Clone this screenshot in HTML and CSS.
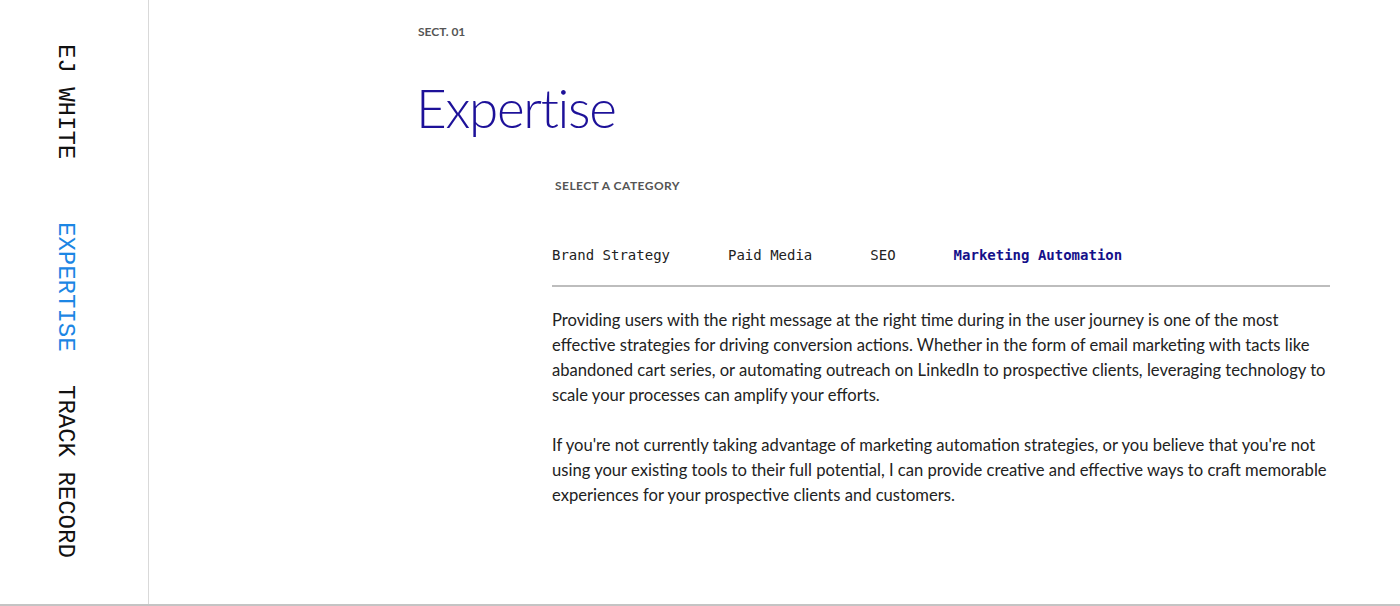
FILE: index.html
```html
<!DOCTYPE html>
<html lang="en">
<head>
<meta charset="utf-8">
<title>EJ White — Expertise</title>
<link rel="stylesheet" href="styles.css">
</head>
<body>
<div class="page">
  <nav class="sidebar">
    <a class="nav-item">EJ WHITE</a>
    <a class="nav-item active">EXPERTISE</a>
    <a class="nav-item">TRACK RECORD</a>
    <a class="nav-item">CONTACT</a>
  </nav>
  <main class="main">
    <div class="sect-label">SECT. 01</div>
    <h1 class="title">Expertise</h1>
    <section class="content">
      <div class="cat-label">SELECT A CATEGORY</div>
      <div class="tabs">
        <span class="tab">Brand Strategy</span>
        <span class="tab">Paid Media</span>
        <span class="tab">SEO</span>
        <span class="tab active">Marketing Automation</span>
      </div>
      <div class="body-text">
        <p>Providing users with the right message at the right time during in the user journey is one of the most effective strategies for driving conversion actions. Whether in the form of email marketing with tacts like abandoned cart series, or automating outreach on LinkedIn to prospective clients, leveraging technology to scale your processes can amplify your efforts.</p>
        <p>If you're not currently taking advantage of marketing automation strategies, or you believe that you're not using your existing tools to their full potential, I can provide creative and effective ways to craft memorable experiences for your prospective clients and customers.</p>
      </div>
    </section>
  </main>
</div>
</body>
</html>
```

FILE: styles.css
```css
* { box-sizing: border-box; }
html, body { margin: 0; padding: 0; background: #fff; }
body { font-family: "Lato", "Liberation Sans", sans-serif; color: #222; overflow: hidden; }

.page {
  display: flex;
  height: 606px;
  border-bottom: 2px solid #c4c4c4;
  overflow: hidden;
}

.sidebar {
  width: 149px;
  flex: 0 0 149px;
  border-right: 1px solid #d9d9d9;
  display: flex;
  flex-direction: column;
  align-items: center;
  padding-top: 9px;
}
.nav-item {
  writing-mode: vertical-rl;
  height: 185px;
  flex: 0 0 185px;
  display: flex;
  align-items: center;
  justify-content: center;
  font-family: "Liberation Mono", "DejaVu Sans Mono", monospace;
  font-size: 24px;
  line-height: 24px;
  color: #111;
  margin-right: 18px;
}
.nav-item.active { color: #1c86e4; }

.main {
  flex: 1;
  padding: 24px 0 0 269px;
}
.sect-label {
  font-size: 12px;
  line-height: 16px;
  font-weight: 700;
  color: #555;
}
.title {
  margin: 36px 0 0 -2px;
  font-size: 53px;
  letter-spacing: -1.3px;
  line-height: 1.2;
  font-weight: 300;
  color: #1d1199;
}
.content {
  margin: 38px 0 0 134px;
  width: 778px;
}
.cat-label {
  font-size: 12px;
  line-height: 16px;
  font-weight: 700;
  letter-spacing: 0.45px;
  color: #555;
  padding-left: 3px;
}
.tabs {
  display: flex;
  gap: 58px;
  margin-top: 53px;
  padding-bottom: 21px;
  border-bottom: 2px solid #bdbdbd;
}
.tab {
  font-family: "DejaVu Sans Mono", monospace;
  font-size: 14px;
  line-height: 17px;
  color: #222;
}
.tab.active { color: #15108a; font-weight: 700; }

.body-text { margin-top: 21px; }
.body-text p {
  margin: 0 0 25px;
  font-size: 16.6px;
  line-height: 25px;
  color: #222;
}
```
